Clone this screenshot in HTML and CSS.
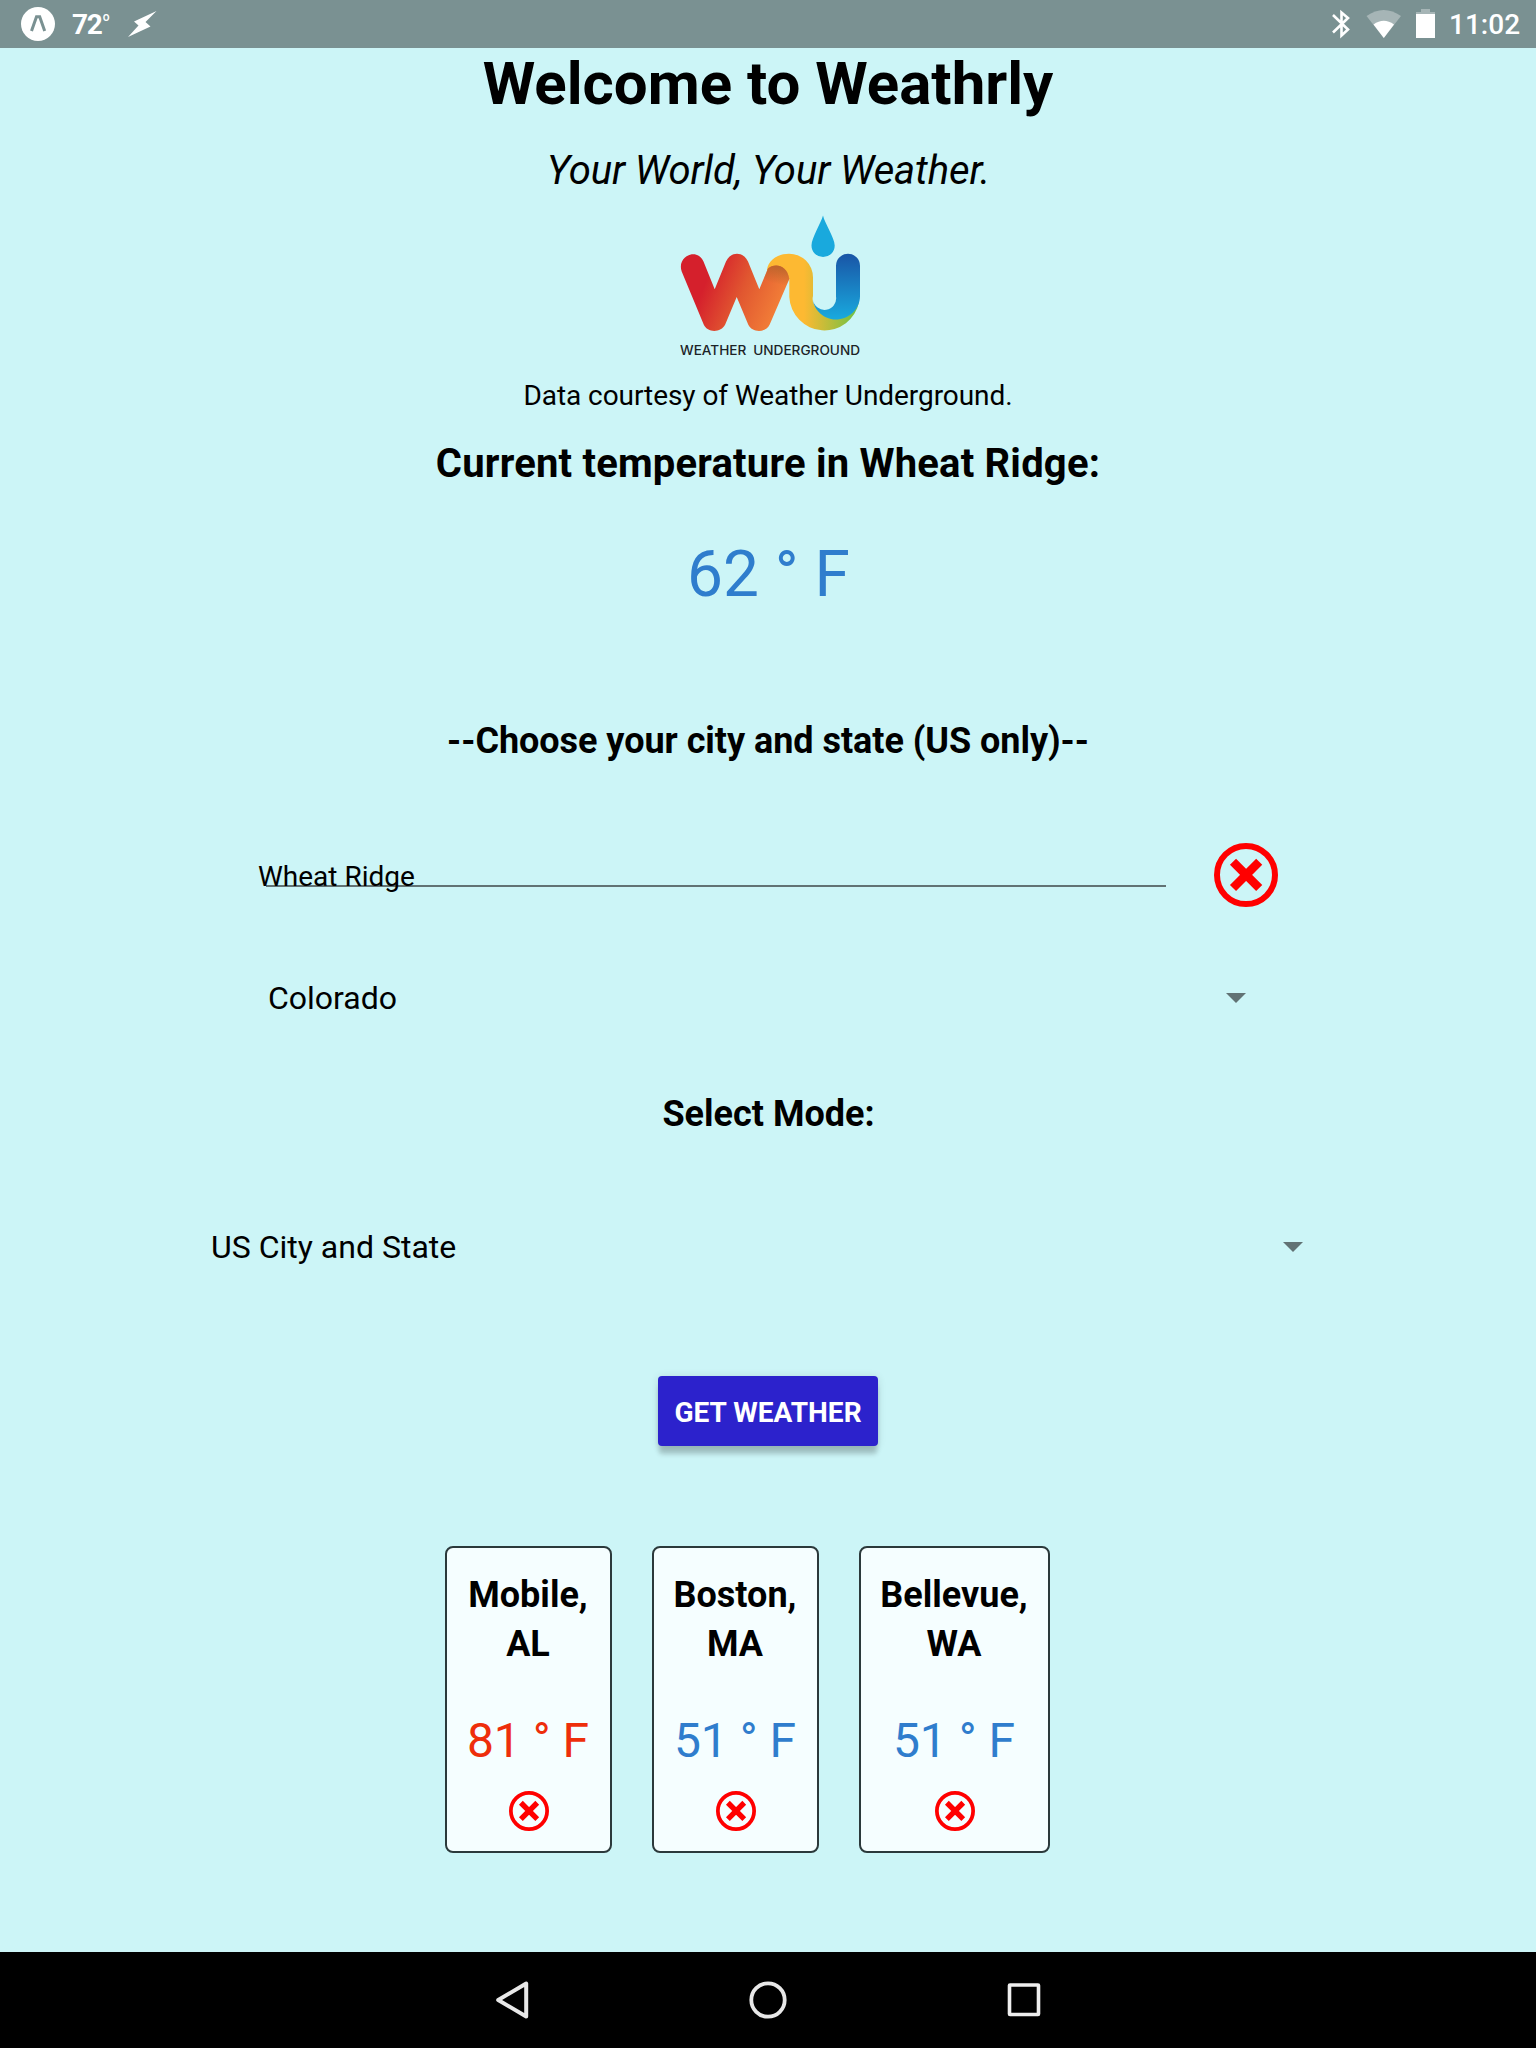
FILE: index.html
```html
<!DOCTYPE html>
<html lang="en">
<head>
<meta charset="utf-8">
<title>Weathrly</title>
<link rel="stylesheet" href="styles.css">
</head>
<body>
<svg class="defs" width="0" height="0" aria-hidden="true">
  <symbol id="remove" viewBox="0 0 64 64">
    <circle cx="32" cy="32" r="29" fill="none" stroke="#f00" stroke-width="6"/>
    <path d="M19 18.8 45.2 45M45.2 18.8 19 45" stroke="#f00" stroke-width="8.6" fill="none"/>
  </symbol>
</svg>
<header class="status">
  <svg class="status-left-icon" width="34" height="34" viewBox="0 0 34 34"><circle cx="17" cy="17" r="17" fill="#fff"/><path d="M10.500 24 15.500 9.800H18.700L23.700 24" fill="none" stroke="#7a9192" stroke-width="3"/></svg>
  <span class="status-temp">72<span class="status-deg">o</span></span>
  <svg class="bolt" width="30" height="28" viewBox="0 0 30 28"><path d="M29.500 1 7 11.500 11.500 15.500 1 27 23.500 16.500 18.500 12Z" fill="#fff"/></svg>
  <span class="spacer"></span>
  <svg class="bluetooth" width="20" height="30" viewBox="0 0 20 30"><path d="M2 6 17 20.500 10.500 26.500V3.500L17 9 2 23.500" fill="none" stroke="#fff" stroke-width="2.600"/></svg>
  <svg class="wifi" width="36" height="30" viewBox="0 0 36 30"><path d="M.5 7Q17.800-5 35 7L17.800 29Z" fill="#a6b5b6"/><path d="M7.500 15.500Q17.800 8 28 15.500L17.800 29Z" fill="#fff"/></svg>
  <svg class="battery" width="20" height="30" viewBox="0 0 20 30"><path d="M5 0H14V3H19V9H0V3H5Z" fill="#a6b5b6"/><path d="M0 5H19V29H0Z" fill="#fff"/></svg>
  <span class="clock">11:02</span>
</header>
<main class="app">
  <h1 class="title">Welcome to Weathrly</h1>
  <p class="tagline">Your World, Your Weather.</p>
  <svg class="logo" width="184" height="144" viewBox="0 0 184 144" role="img" aria-label="Weather Underground">
    <defs>
      <linearGradient id="warm" gradientUnits="userSpaceOnUse" x1="18" y1="62" x2="105" y2="98"><stop offset="0" stop-color="#d5202c"/><stop offset=".1" stop-color="#d5202c"/><stop offset=".5" stop-color="#e15730"/><stop offset="1" stop-color="#f58539"/></linearGradient>
      <linearGradient id="fold" gradientUnits="userSpaceOnUse" x1="100" y1="51" x2="96" y2="70"><stop offset="0" stop-color="#ba652b"/><stop offset="1" stop-color="#ba652b" stop-opacity="0"/></linearGradient>
      <linearGradient id="yellow" gradientUnits="userSpaceOnUse" x1="124" y1="0" x2="174" y2="0"><stop offset="0" stop-color="#fdb932"/><stop offset="1" stop-color="#77c143"/></linearGradient>
      <linearGradient id="blue" gradientUnits="userSpaceOnUse" x1="0" y1="42" x2="0" y2="104"><stop offset="0" stop-color="#1958a8"/><stop offset="1" stop-color="#19a8dd"/></linearGradient>
    </defs>
    <path d="M143 1.500C141 9 131.500 24 131.500 31.500A11.500 11.500 0 0 0 154.700 31.500C154.700 24 144.600 9 143 1.500Z" fill="#19a9dd"/>
    <path d="M87 56C88 47 97 39.700 109 39.700A23.800 23.800 0 0 1 133 63.500V82A11.500 11.500 0 0 0 156 88L179 88A35.200 35.200 0 0 1 109.300 83V65Z" fill="url(#yellow)"/>
    <path d="M133 86A11.500 11.500 0 0 0 156 82.500V51.700A12 12 0 0 1 180 51.700V82C180 95 169 105.500 155.500 105.500C144 105.500 134 96 133 86Z" fill="url(#blue)"/>
    <path d="M1.700 57.500C-3.500 42.500 17 33 23.500 47.500L34.700 75.200 46 47.500C51 37 63 37 68 47.500L79.300 75.200 88 54.500C94 49 107 50 109.300 65L89.700 110.500C86 119 72 119 68.200 110.500L56.700 83 45.200 110.500C41 119 27.500 119 23.700 110.500Z" fill="url(#warm)"/>
    <path d="M84 64 88 54.500C94 49 107 50 109.300 65L104 77Z" fill="url(#fold)"/>
    <text class="logo-text" x="0" y="141.300" textLength="180" lengthAdjust="spacingAndGlyphs">WEATHER UNDERGROUND</text>
  </svg>
  <p class="credit">Data courtesy of Weather Underground.</p>
  <h2 class="current-label">Current temperature in Wheat Ridge:</h2>
  <p class="current-temp">62 ° F</p>
  <h3 class="prompt">--Choose your city and state (US only)--</h3>
  <div class="city-row">
    <div class="city-input">Wheat Ridge</div>
    <svg class="remove-large" width="64" height="64"><use href="#remove"/></svg>
  </div>
  <div class="picker picker-state"><span>Colorado</span><svg width="20" height="10" viewBox="0 0 20 10"><path d="M0 0H20L10 10Z" fill="#617274"/></svg></div>
  <h3 class="mode-label">Select Mode:</h3>
  <div class="picker picker-mode"><span>US City and State</span><svg width="20" height="10" viewBox="0 0 20 10"><path d="M0 0H20L10 10Z" fill="#617274"/></svg></div>
  <button class="submit">GET WEATHER</button>
  <section class="cards">
    <article class="card"><h3 class="place">Mobile,<br>AL</h3><p class="temp hot">81 ° F</p><svg width="40" height="40"><use href="#remove"/></svg></article>
    <article class="card"><h3 class="place">Boston,<br>MA</h3><p class="temp">51 ° F</p><svg width="40" height="40"><use href="#remove"/></svg></article>
    <article class="card card-wide"><h3 class="place">Bellevue,<br>WA</h3><p class="temp">51 ° F</p><svg width="40" height="40"><use href="#remove"/></svg></article>
  </section>
</main>
<nav class="navbar">
  <svg width="40" height="48" viewBox="0 0 40 48"><path d="M34.200 7.500V40.500L6.200 24Z" fill="none" stroke="#e8e8e8" stroke-width="4" stroke-linejoin="round"/></svg>
  <svg width="40" height="48" viewBox="0 0 40 48"><circle cx="20" cy="24" r="16.700" fill="none" stroke="#e8e8e8" stroke-width="3.800"/></svg>
  <svg width="40" height="48" viewBox="0 0 40 48"><rect x="5.500" y="9" width="29" height="29.500" rx=".5" fill="none" stroke="#eee" stroke-width="3.600"/></svg>
</nav>
</body>
</html>
```
FILE: styles.css
```css
* { box-sizing: border-box; }
body { margin: 0; width: 1536px; height: 2048px; display: flex; flex-direction: column; background: #ccf5f7; color: #000; font-family: Roboto, sans-serif; }
h1, h2, h3, p { margin: 0; }
svg { display: block; flex: none; }
.defs { position: absolute; }
.status { height: 48px; flex: none; display: flex; align-items: flex-start; padding: 0 17px 0 21px; background: #7a9192; color: #fff; font-weight: 500; font-size: 28px; line-height: 50px; }
.status-left-icon { margin-top: 7px; }
.status-temp { margin-left: 17px; width: 38px; display: flex; font-weight: 700; letter-spacing: -1.2px; }
.status-deg { font-size: 12px; line-height: 35px; font-weight: 500; margin-left: 1px; }
.bolt { margin: 10px 0 0 17px; filter: blur(.6px); }
.spacer { flex: 1; }
.bluetooth { margin-top: 9px; }
.wifi { margin: 9px 0 0 15px; }
.battery { margin: 9px 0 0 14px; }
.clock { margin-left: 13px; width: 70px; }
.app { flex: 1; display: flex; flex-direction: column; align-items: center; }
.title { font-size: 60px; line-height: 71px; }
.tagline { margin: 28px 0 0 1px; font-size: 40px; line-height: 48px; font-style: italic; font-weight: 400; letter-spacing: -.1px; }
.logo { margin: 19px 0 0 8px; }
.logo-text { font: 500 12.500px Inter, sans-serif; word-spacing: 3px; fill: #1c2327; }
.credit { margin-top: 21px; font-size: 28px; line-height: 34px; letter-spacing: -.06px; }
.current-label { margin-top: 27px; font-size: 40px; line-height: 48px; letter-spacing: .2px; }
.current-temp { margin: 49px 0 0 1px; font-size: 64px; line-height: 76px; color: #2f7dcd; }
.prompt { margin-top: 107px; font-size: 36px; line-height: 42px; letter-spacing: -.04px; }
.city-row { width: 1020px; margin-top: 81px; display: flex; justify-content: space-between; }
.city-input { width: 908px; height: 45px; padding-top: 17px; font-size: 28px; line-height: 34px; background: linear-gradient(#617274, #617274) 8px 42px / 900px 2px no-repeat; }
.picker { display: flex; align-items: center; justify-content: space-between; margin-right: 22px; font-size: 32px; line-height: 38px; }
.picker-state { width: 978px; margin-top: 72px; }
.mode-label { margin: 76px 0 0 1px; font-size: 36px; line-height: 42px; }
.picker-mode { width: 1092px; margin-top: 93px; }
.submit { width: 220px; height: 70px; margin-top: 110px; padding: 3px 0 0; border: 0; border-radius: 4px; background: #2c22cc; color: #fff; font: 700 28px/34px Roboto, sans-serif; letter-spacing: .03px; white-space: nowrap; box-shadow: 0 9px 5px -1px rgba(0,0,0,.2), 0 1px 9px rgba(0,0,0,.12); }
.cards { display: flex; gap: 40px; margin: 100px 42px 0 0; }
.card { width: 167px; height: 307px; padding-top: 23px; display: flex; flex-direction: column; align-items: center; border: 2px solid #2b393b; border-radius: 8px; background: #f5feff; }
.card-wide { width: 191px; }
.place { font-size: 36px; line-height: 49px; text-align: center; }
.temp { margin-top: 43px; font-size: 48px; line-height: 58px; color: #2f7dcd; }
.hot { color: #ee2e0b; }
.card svg { margin: 21px 0 0 1px; }
.navbar { height: 96px; flex: none; display: flex; justify-content: center; align-items: center; gap: 216px; background: #000; }
```
